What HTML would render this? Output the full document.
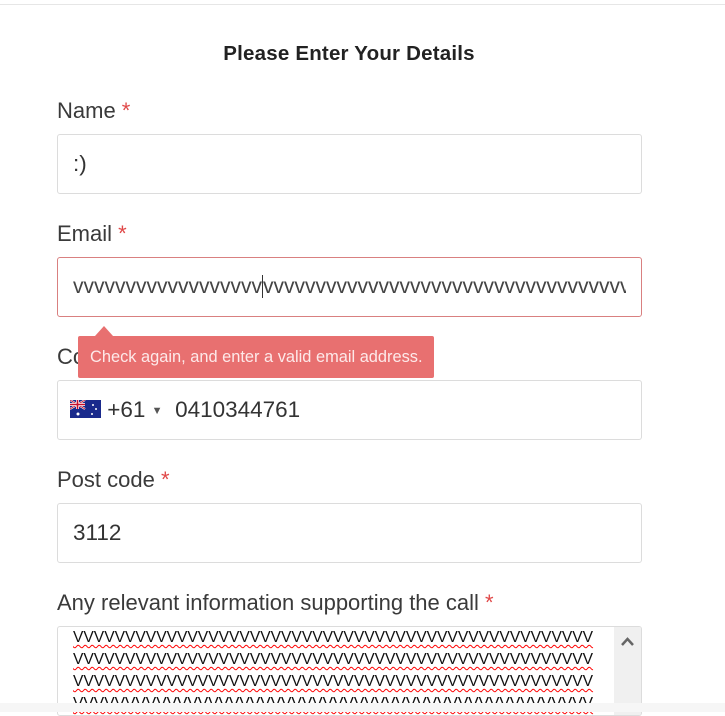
<!DOCTYPE html>
<html><head><style>
body{margin:0;width:725px;height:712px;background:#fff;font-family:"Liberation Sans",sans-serif;position:relative;overflow:hidden;color:#333}
.top{position:absolute;left:0;right:0;top:0;height:4px;border-bottom:1px solid #e6e6e6}
.title{position:absolute;top:42px;left:0;width:698px;text-align:center;font-size:20.5px;font-weight:bold;color:#222;letter-spacing:0.2px}
.lbl{position:absolute;left:57px;font-size:22px;color:#3a3a3a}
.lbl b{color:#e04848;font-weight:normal}
.in{position:absolute;left:57px;width:585px;height:60px;border:1px solid #dcdcdc;border-radius:3px;box-sizing:border-box;font-size:22.5px;line-height:58px;padding-left:15px;color:#333;overflow:hidden;white-space:nowrap}
.err{border-color:#d98080}
.tip{position:absolute;left:78px;top:336px;width:356px;height:42px;background:#e87070;color:#fde9e9;font-size:16.4px;line-height:42px;text-indent:12px;border-radius:2px;white-space:nowrap}
.arr{position:absolute;left:95px;top:326px;width:0;height:0;border-left:9px solid transparent;border-right:9px solid transparent;border-bottom:10px solid #e87070}
.ta{position:absolute;left:57px;top:626px;width:585px;height:90px;border:1px solid #dcdcdc;border-radius:3px;box-sizing:border-box;overflow:hidden}
.ta .t{position:absolute;left:15px;top:0;font-size:15.6px;line-height:22px;color:#111;white-space:nowrap;width:525px;overflow:hidden}
.ta .t div{text-decoration:underline wavy red;text-decoration-thickness:1px;text-underline-offset:2px}
.sb{position:absolute;right:0;top:0;width:27px;height:100%;background:#f0f0f0}
.bot{position:absolute;left:0;right:0;top:703px;height:9px;background:#f6f6f6}
</style></head><body>
<div class="top"></div>
<div class="title">Please Enter Your Details</div>
<div class="lbl" style="top:98px">Name <b>*</b></div>
<div class="in" style="top:134px">:)</div>
<div class="lbl" style="top:221px">Email <b>*</b></div>
<div class="in err" style="top:257px;padding-right:15px"><div style="overflow:hidden;font-size:21px;color:#444">vvvvvvvvvvvvvvvvvv<span style="border-left:1px solid #333"></span>vvvvvvvvvvvvvvvvvvvvvvvvvvvvvvvvvvvvvvv</div></div>
<div class="lbl" style="top:344px">Contact Number <b>*</b></div>
<div class="in" style="top:380px;padding-left:12px"><svg width="31" height="18" viewBox="0 0 31 18" style="vertical-align:-1px"><rect width="31" height="18" fill="#1a2a8c"/><path d="M0 0L15 9M15 0L0 9" stroke="#fff" stroke-width="2"/><path d="M0 0L15 9M15 0L0 9" stroke="#c8102e" stroke-width="0.8"/><path d="M7.5 0V9M0 4.5H15" stroke="#fff" stroke-width="3"/><path d="M7.5 0V9M0 4.5H15" stroke="#c8102e" stroke-width="1.6"/><circle cx="8" cy="14" r="1.5" fill="#fff"/><circle cx="23" cy="5" r="1" fill="#fff"/><circle cx="26" cy="9" r="1" fill="#fff"/><circle cx="22" cy="14" r="1" fill="#fff"/></svg> +61 <span style="font-size:11px;color:#555;position:relative;top:-3px">▼</span>&nbsp;&nbsp;0410344761</div>
<div class="lbl" style="top:467px">Post code <b>*</b></div>
<div class="in" style="top:503px">3112</div>
<div class="lbl" style="top:590px">Any relevant information supporting the call <b>*</b></div>
<div class="ta"><div class="t"><div>VVVVVVVVVVVVVVVVVVVVVVVVVVVVVVVVVVVVVVVVVVVVVVVVVV</div><div>VVVVVVVVVVVVVVVVVVVVVVVVVVVVVVVVVVVVVVVVVVVVVVVVVV</div><div>VVVVVVVVVVVVVVVVVVVVVVVVVVVVVVVVVVVVVVVVVVVVVVVVVV</div><div>VVVVVVVVVVVVVVVVVVVVVVVVVVVVVVVVVVVVVVVVVVVVVVVVVV</div></div><div class="sb"><svg width="27" height="20" style="position:absolute;top:4px"><path d="M8 14L13.5 8L19 14" stroke="#666" stroke-width="2.5" fill="none"/></svg></div></div>
<div class="arr"></div>
<div class="tip">Check again, and enter a valid email address.</div>
<div class="bot"></div>
</body></html>
